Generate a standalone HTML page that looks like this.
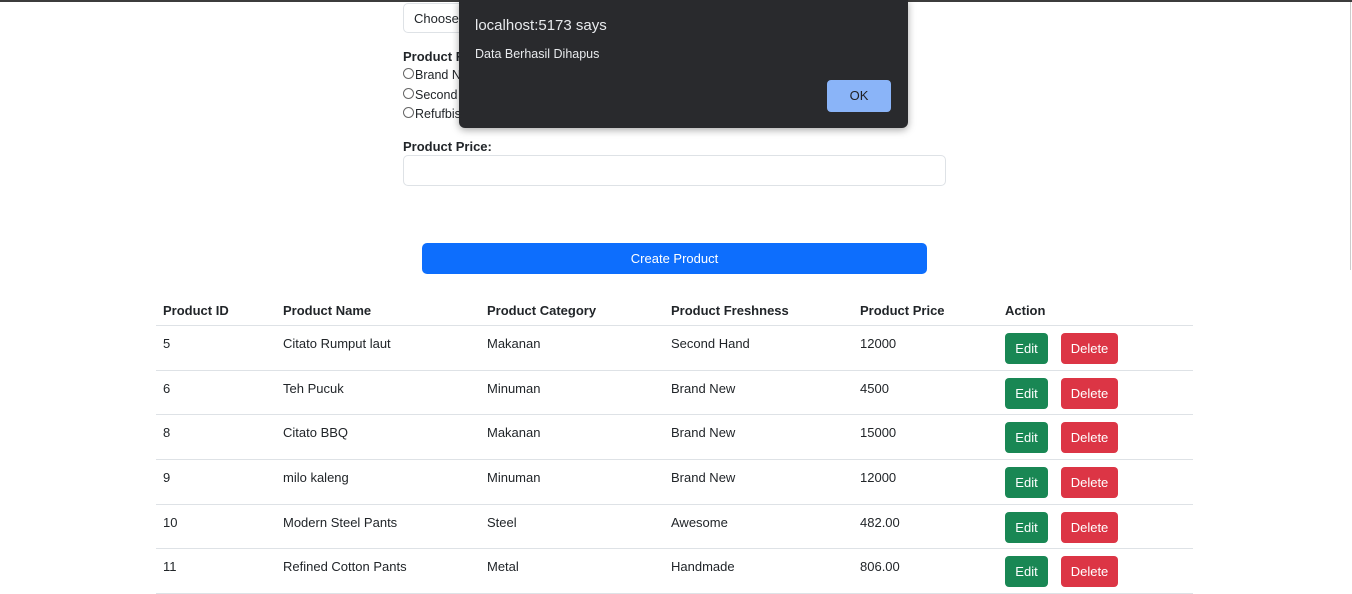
<!DOCTYPE html>
<html><head><style>
body{margin:0;width:1352px;height:589px;overflow:hidden;background:#fff;font-family:"Liberation Sans",sans-serif;font-size:13px;color:#212529;position:relative}
.abs{position:absolute}
.topbar{left:0;top:0;width:1352px;height:2px;background:#3c3c3c}
.sel{left:403px;top:3px;width:120px;height:30px;border:1px solid #dee2e6;border-radius:5px;box-sizing:border-box;padding:7px 10px}
.lbl{font-weight:bold;font-size:13px}
.radio{font-size:12.5px}
.radio span{display:inline-block;width:9px;height:9px;border:1px solid #666;border-radius:50%;margin-right:1px;vertical-align:0}
.input{left:403px;top:155px;width:543px;height:31px;border:1px solid #dee2e6;border-radius:5px;box-sizing:border-box}
.btn{left:422px;top:243px;width:505px;height:31px;background:#0d6efd;border-radius:5px;color:#fff;text-align:center;line-height:32px}
.dlg{left:459px;top:0;width:449px;height:128px;background:#292a2d;border-radius:0 0 6px 6px;box-shadow:0 2px 8px rgba(0,0,0,.35);color:#e8eaed}
.ok{left:368px;top:80px;width:64px;height:32px;background:#8ab4f8;border-radius:4px;color:#202124;text-align:center;line-height:32px}
table{position:absolute;left:156px;top:296px;width:1037px;border-collapse:collapse}
th{text-align:left;font-weight:bold;height:29px;padding:0 7px;border-bottom:1px solid #dee2e6;vertical-align:middle}
td{padding:0 7px;border-bottom:1px solid #dee2e6;vertical-align:top;padding-top:10px;box-sizing:border-box}
tr.a td{height:45px}tr.b td{height:44px}
.e,.d{display:inline-block;height:31px;line-height:31px;border-radius:4px;color:#fff;text-align:center;margin-top:-3px}
.e{width:43px;background:#198754}.d{width:57px;background:#dc3545;margin-left:13px}
.sb{left:1350px;top:2px;width:1px;height:268px;background:#ccc}
</style></head><body>
<div class="abs topbar"></div>
<div class="abs sb"></div>
<div class="abs sel">Choose</div>
<div class="abs lbl" style="left:403px;top:49px">Product F</div>
<div class="abs radio" style="left:403px;top:68px"><span></span>Brand N</div>
<div class="abs radio" style="left:403px;top:88px"><span></span>Second</div>
<div class="abs radio" style="left:403px;top:107px"><span></span>Refufbis</div>
<div class="abs lbl" style="left:403px;top:139px">Product Price:</div>
<div class="abs input"></div>
<div class="abs btn">Create Product</div>
<div class="abs dlg">
<div class="abs" style="left:16px;top:17px;font-size:15px">localhost:5173 says</div>
<div class="abs" style="left:16px;top:47px;font-size:12.5px">Data Berhasil Dihapus</div>
<div class="abs ok">OK</div>
</div>
<table>
<tr><th style="width:106px">Product ID</th><th style="width:190px">Product Name</th><th style="width:170px">Product Category</th><th style="width:175px">Product Freshness</th><th style="width:131px">Product Price</th><th>Action</th></tr>
<tr class="a"><td>5</td><td>Citato Rumput laut</td><td>Makanan</td><td>Second Hand</td><td>12000</td><td><span class="e">Edit</span><span class="d">Delete</span></td></tr>
<tr class="b"><td>6</td><td>Teh Pucuk</td><td>Minuman</td><td>Brand New</td><td>4500</td><td><span class="e">Edit</span><span class="d">Delete</span></td></tr>
<tr class="a"><td>8</td><td>Citato BBQ</td><td>Makanan</td><td>Brand New</td><td>15000</td><td><span class="e">Edit</span><span class="d">Delete</span></td></tr>
<tr class="a"><td>9</td><td>milo kaleng</td><td>Minuman</td><td>Brand New</td><td>12000</td><td><span class="e">Edit</span><span class="d">Delete</span></td></tr>
<tr class="b"><td>10</td><td>Modern Steel Pants</td><td>Steel</td><td>Awesome</td><td>482.00</td><td><span class="e">Edit</span><span class="d">Delete</span></td></tr>
<tr class="a"><td>11</td><td>Refined Cotton Pants</td><td>Metal</td><td>Handmade</td><td>806.00</td><td><span class="e">Edit</span><span class="d">Delete</span></td></tr>
</table>
</body></html>
